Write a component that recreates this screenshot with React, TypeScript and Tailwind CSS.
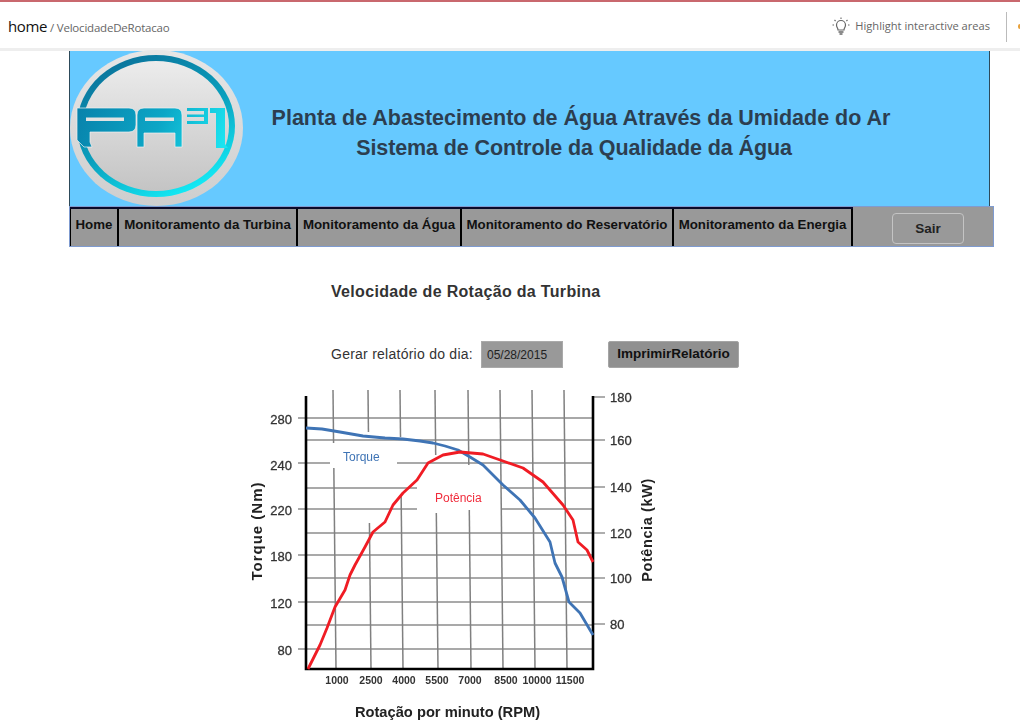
const menu = [
  { label: "Home", w: "w-[49px]" },
  { label: "Monitoramento da Turbina", w: "w-[179px]" },
  { label: "Monitoramento da Água", w: "w-[164px]" },
  { label: "Monitoramento do Reservatório", w: "w-[212px]" },
  { label: "Monitoramento da Energia", w: "w-[179px]" },
];

// gridlines are broken where the curve labels sit
const hLines: { y: number; segs: number[][]; thick?: boolean }[] = [
  { y: 418, segs: [[298, 593]], thick: true },
  { y: 440, segs: [[306, 593]] },
  { y: 463, segs: [[298, 330], [397, 593]] },
  { y: 488, segs: [[306, 417], [501, 593]] },
  { y: 509, segs: [[298, 417], [501, 593]] },
  { y: 533, segs: [[306, 593]] },
  { y: 555, segs: [[298, 593]] },
  { y: 578, segs: [[306, 593]] },
  { y: 602, segs: [[298, 593]] },
  { y: 625, segs: [[306, 593]] },
  { y: 649, segs: [[298, 593]] },
];
const vLines: { x: number; segs: number[][] }[] = [
  { x: 335, segs: [[390, 443], [468, 669]] },
  { x: 370, segs: [[390, 432], [523, 669]] },
  { x: 402, segs: [[390, 437], [495, 669]] },
  { x: 437, segs: [[390, 455], [513, 669]] },
  { x: 470, segs: [[390, 465], [510, 669]] },
  { x: 502, segs: [[390, 669]] },
  { x: 534, segs: [[390, 669]] },
  { x: 566, segs: [[390, 669]] },
];
const leftTicks = [
  { y: 419, t: "280" },
  { y: 465, t: "240" },
  { y: 510, t: "220" },
  { y: 556, t: "180" },
  { y: 603, t: "120" },
  { y: 650, t: "80" },
];
const rightTicks = [
  { y: 397, t: "180" },
  { y: 440, t: "160" },
  { y: 487, t: "140" },
  { y: 533, t: "120" },
  { y: 578, t: "100" },
  { y: 624, t: "80" },
];
const xTicks = [
  { x: 337, t: "1000" },
  { x: 371, t: "2500" },
  { x: 404, t: "4000" },
  { x: 437, t: "5500" },
  { x: 470, t: "7000" },
  { x: 506, t: "8500" },
  { x: 537, t: "10000" },
  { x: 570, t: "11500" },
];

const torque =
  "306,428 322,429 340,432 363,436 385,438 403,439 420,441 433,443 445,446 458,450 470,457 483,465 503,485 520,500 535,518 550,542 555,563 562,577 569,602 580,613 593,635";
const potencia =
  "308,669 320,645 327,628 335,607 345,590 350,575 355,565 365,547 373,532 385,522 393,505 403,493 417,480 428,463 443,455 460,452 483,454 503,461 523,468 543,482 563,505 573,520 578,542 587,550 593,562";

function Logo() {
  return (
    <svg width="173" height="156" viewBox="0 0 173 156" className="shrink-0 relative z-10 -mt-px">
      <defs>
        <linearGradient id="rim" x1="0" y1="0" x2="0" y2="1">
          <stop offset="0" stopColor="#e6e6e6" />
          <stop offset="1" stopColor="#cecece" />
        </linearGradient>
        <linearGradient id="disc" x1="0" y1="0" x2="0" y2="1">
          <stop offset="0" stopColor="#ececec" />
          <stop offset="1" stopColor="#c4c4c4" />
        </linearGradient>
        <linearGradient id="teal" x1="0.15" y1="0" x2="0.7" y2="1">
          <stop offset="0" stopColor="#0a6f98" />
          <stop offset="0.55" stopColor="#0a9fbd" />
          <stop offset="1" stopColor="#14eef8" />
        </linearGradient>
        <linearGradient id="letter" gradientUnits="userSpaceOnUse" x1="10" y1="50" x2="150" y2="105">
          <stop offset="0" stopColor="#0882ab" />
          <stop offset="0.55" stopColor="#0ca6c6" />
          <stop offset="1" stopColor="#1ce4f0" />
        </linearGradient>
      </defs>
      <ellipse cx="86.5" cy="78" rx="86.5" ry="78" fill="url(#rim)" />
      <ellipse cx="86" cy="76" rx="79" ry="71" fill="url(#teal)" />
      <ellipse cx="86" cy="76" rx="73" ry="65" fill="url(#disc)" />
      <g stroke="#f2f2f2" strokeWidth="0.7">
        {/* P */}
        <path d="M7 58 H59 Q66 58 66 65 V75 Q66 82 59 82 H20 V92 L22 97 H14 L7 90 Z" fill="url(#letter)" />
        {/* A */}
        <path
          d="M67 97 V65 Q67 58 74 58 H105 Q112 58 112 65 V97 H105 V83 H74 V97 Z"
          fill="url(#letter)"
        />
      </g>
      {/* 3 */}
      <path d="M117 58 H138 V74 H117 V71 H134 V67 H117 V64.5 H134 V61 H117 Z" fill="url(#letter)" />
      {/* 1 */}
      <path d="M140 58 H155 V94 L158 98 H146 V63 H140 Z" fill="url(#letter)" />
      <rect x="16" y="67.5" width="38" height="3.5" fill="#e2e2e2" />
      <rect x="75" y="67.5" width="29" height="3.5" fill="#e2e2e2" />
    </svg>
  );
}

function Chart() {
  return (
    <svg width="440" height="340" viewBox="240 380 440 340" className="block blur-[0.5px]">
      <g fill="none">
        {hLines.map((l) =>
          l.segs.map((s) => (
            <line
              key={`${l.y}-${s[0]}`}
              x1={s[0]}
              x2={s[1]}
              y1={l.y}
              y2={l.y}
              stroke={l.thick ? "#a8a8a8" : "#8c8c8c"}
              strokeWidth={l.thick ? 2.2 : 1.5}
            />
          )),
        )}
        {vLines.map((l) =>
          l.segs.map((s) => (
            <line
              key={`${l.x}-${s[0]}`}
              x1={l.x - 2 + ((s[0] - 390) / 279) * 3}
              x2={l.x - 2 + ((s[1] - 390) / 279) * 3}
              y1={s[0]}
              y2={s[1]}
              stroke="#808080"
              strokeWidth="1.5"
            />
          )),
        )}
      </g>
      <g stroke="#777" strokeWidth="1.2">
        {rightTicks.map((t) => (
          <line key={t.t} x1="593" x2="605" y1={t.y} y2={t.y} />
        ))}
      </g>
      <path d="M306 396 V669 H593 V396" fill="none" stroke="#000" strokeWidth="2.6" />
      <polyline points={torque} fill="none" stroke="#3f74b5" strokeWidth="2.8" strokeLinejoin="round" />
      <polyline points={potencia} fill="none" stroke="#f01c24" strokeWidth="2.8" strokeLinejoin="round" />
      <g fontFamily="'Liberation Sans', Arial, sans-serif">
        <text x="343" y="461" fontSize="12" fill="#3f74b5">Torque</text>
        <text x="435" y="502" fontSize="12" fill="#f02c3c">Potência</text>
        <g fontSize="13" stroke="#333" strokeWidth="0.3" fill="#333">
          {leftTicks.map((t) => (
            <text key={t.t} x="292" y={t.y + 5} textAnchor="end">{t.t}</text>
          ))}
          {rightTicks.map((t) => (
            <text key={t.t} x="610" y={t.y + 5}>{t.t}</text>
          ))}
        </g>
        <g fontSize="10.5" fontWeight="700" fill="#333">
          {xTicks.map((t) => (
            <text key={t.t} x={t.x} y="684" textAnchor="middle">{t.t}</text>
          ))}
        </g>
        <g fontWeight="700" fill="#222">
          <text x="447.5" y="717" fontSize="14.7" textAnchor="middle">Rotação por minuto (RPM)</text>
          <text transform="translate(262 531) rotate(-90)" fontSize="15" letterSpacing="1" textAnchor="middle">Torque (Nm)</text>
          <text transform="translate(652 530) rotate(-90)" fontSize="14.5" letterSpacing="0.6" textAnchor="middle">Potência (kW)</text>
        </g>
      </g>
    </svg>
  );
}

export default function App() {
  return (
    <div className="w-[1020px] h-[720px] overflow-hidden bg-white font-['Liberation_Sans',Arial,sans-serif]">
      {/* barra superior */}
      <div className="h-[51px] border-t-2 border-[#c9686e] border-b-[3px] border-b-[#eeeeee] flex items-center justify-between pl-2 pt-[3px] font-['Open_Sans','Noto_Sans',sans-serif]">
        <div className="flex items-baseline gap-[3px]">
          <span className="text-[15px] text-[#111] tracking-[-0.4px]">home</span>
          <span className="text-[11.5px] text-[#666] tracking-[-0.2px]">/ VelocidadeDeRotacao</span>
        </div>
        <div className="flex items-center h-[30px]">
          <svg width="20" height="20" viewBox="0 0 20 20" fill="none" stroke="#666" strokeWidth="1.2" className="mr-1">
            <path d="M7 13 C7 11 5.5 10.5 5.5 8 A4.5 4.5 0 0 1 14.5 8 C14.5 10.5 13 11 13 13 Z" />
            <path d="M7.5 15 H12.5 M8.5 17 H11.5" strokeWidth="1.5" />
            <path d="M10 0.5 V2 M3.5 3 L4.6 4 M16.5 3 L15.4 4 M1.5 8 H3 M17 8 H18.5" strokeWidth="1.1" />
          </svg>
          <span className="text-[11.1px] text-[#666] mr-4">Highlight interactive areas</span>
          <div className="w-px h-[30px] bg-[#bbbbbb] mr-[11px]" />
          <div className="w-[2px] h-[5px] bg-[#e8a13c] rounded-l-full" />
        </div>
      </div>

      <div className="ml-[69px] w-[925px]">
        {/* banner */}
        <div className="w-[921px] h-[155px] bg-[#66c9ff] border-x border-[#2d4a5a] flex items-start">
          <Logo />
          <div className="self-center flex-1 pr-[70px] mt-[9px] text-center text-[#2c3e50] font-bold text-[21.5px] leading-[30px]">
            <p className="whitespace-nowrap">Planta de Abastecimento de Água Através da Umidade do Ar</p>
            <p className="pr-[14px] tracking-[-0.1px]">Sistema de Controle da Qualidade da Água</p>
          </div>
        </div>

        {/* menu */}
        <div className="h-[41px] bg-[#999999] border border-[#7f9bd0] flex items-stretch">
          <div className="flex border-t-2 border-[#0a0a2a]">
            {menu.map((item) => (
              <div
                key={item.label}
                className={`${item.w} border-r-2 first:border-l border-black flex items-center justify-center pb-[5px] text-[13.3px] font-bold text-[#111] whitespace-nowrap`}
              >
                {item.label}
              </div>
            ))}
          </div>
          <div className="flex-1 flex items-start justify-start pl-[39px] pt-[6px]">
            <button className="w-[72px] h-[31px] rounded-[4px] border border-[#c4c4c4] text-[13.5px] font-bold text-[#222] pt-[1px]">
              Sair
            </button>
          </div>
        </div>

        {/* conteudo */}
        <h1 className="ml-[262px] mt-[36px] text-[16px] leading-[18px] font-bold text-[#333] whitespace-nowrap tracking-[0.32px]">
          Velocidade de Rotação da Turbina
        </h1>
        <div className="ml-[262px] mt-[40px] flex items-center h-[27px]">
          <label className="text-[14px] text-[#333] tracking-[0.25px] whitespace-nowrap w-[150px]">
            Gerar relatório do dia:
          </label>
          <div className="w-[82px] h-[27px] bg-[#999999] border border-[#aaaaaa] flex items-center pl-[5px] text-[12px] text-[#222]">
            05/28/2015
          </div>
          <button className="ml-[45px] w-[131px] h-[27px] bg-[#909090] rounded-[2px] border border-[#a5a5a5] text-[13.5px] font-bold text-[#111]">
            ImprimirRelatório
          </button>
        </div>
      </div>

      <div className="ml-[240px] mt-[12px]">
        <Chart />
      </div>
    </div>
  );
}
